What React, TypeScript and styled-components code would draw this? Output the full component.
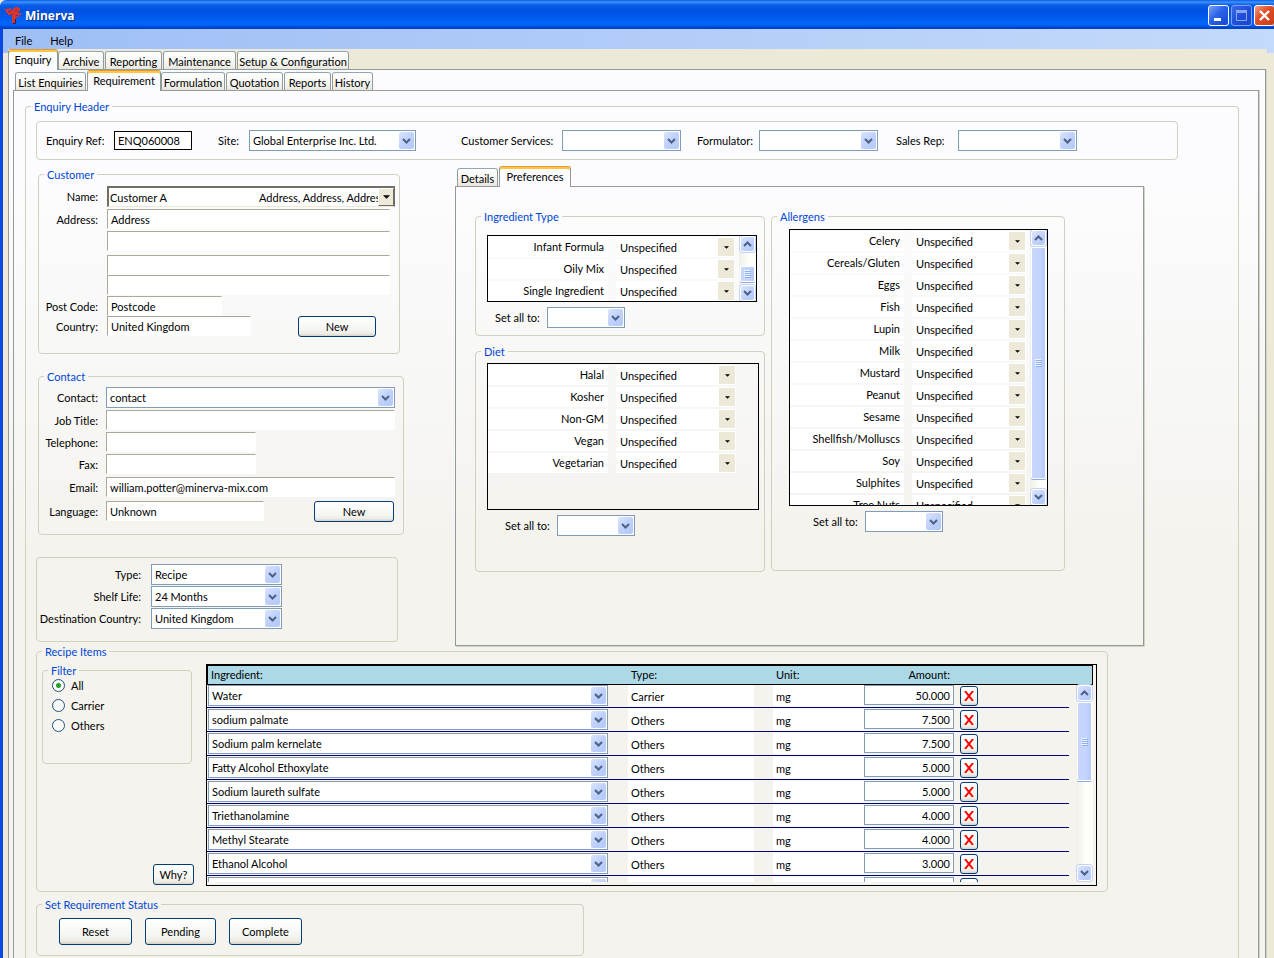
import React, { useId, useState } from 'react';
import styled, { createGlobalStyle } from 'styled-components';

const ink = '#000000';
const sand = '#ece9d8';
const paper = '#f4f3ee';
const groupLine = '#d0d0bf';
const tabLine = '#919b9c';
const captionBlue = '#0046d5';
const fieldBlue = '#7f9db9';

const GlobalStyle = createGlobalStyle`
  * { box-sizing: border-box; }
  body {
    margin: 0;
    background: ${sand};
    color: ${ink};
    font-family: Lato, "Liberation Sans", sans-serif;
    font-size: 11px;
    line-height: 13px;
  }
  button, input, select { font: inherit; color: inherit; margin: 0; }
`;

/* ---------- window frame ---------- */

const Window = styled.div`
  display: flex;
  flex-direction: column;
  min-height: 100vh;
`;

const TitleBar = styled.header`
  display: flex;
  align-items: center;
  gap: 3px;
  height: 29px;
  padding: 2px 0 0 5px;
  overflow: hidden;
  border-top-left-radius: 6px;
  background: linear-gradient(180deg, #0a5be0 0, #3c92ff 2px, #0a5ee8 5px, #0053e1 10px, #0157ea 16px, #0366fb 23px, #0363f8 25px, #0140c4 28px, #0140c4 29px);
`;

const AppTitle = styled.h1`
  flex: 1;
  margin: 0;
  color: #fff;
  font: bold 12px/16px "Open Sans", sans-serif;
  text-shadow: 1px 1px 1px #0a2a80;
`;

const CaptionButtons = styled.div`
  display: flex;
  gap: 2px;
  margin-right: -1px;
`;

const CaptionButton = styled.button<{ $tone: 'blue' | 'dim' | 'red' }>`
  display: grid;
  place-items: center;
  width: 21px;
  height: 21px;
  padding: 0;
  border: 1px solid ${p => (p.$tone === 'dim' ? '#7d9ff0' : '#fff')};
  border-radius: 3px;
  background: ${p =>
    p.$tone === 'red'
      ? 'linear-gradient(135deg, #f0a184 0, #e2512c 40%, #c93c12 100%)'
      : p.$tone === 'dim'
        ? 'linear-gradient(135deg, #3a6be6 0, #1c4fdc 50%, #1a45cf 100%)'
        : 'linear-gradient(135deg, #7c9ff5 0, #2a62ea 45%, #1746cf 100%)'};
`;

const Frame = styled.div`
  flex: 1;
  display: flex;
  flex-direction: column;
  border-left: 3px solid #0b45e3;
`;

const MenuBar = styled.nav`
  display: flex;
  gap: 18px;
  height: 24px;
  padding: 5px 12px 0;
  background: linear-gradient(90deg, #9ebef5 0, #c4dafa 100%);
`;

const MenuItem = styled.button`
  align-self: flex-start;
  height: 13px;
  padding: 0;
  border: 0;
  background: none;
  line-height: 13px;
`;

const Shell = styled.div`
  flex: 1;
  display: flex;
  flex-direction: column;
  margin: -4px 7px 0 5px;
  background: ${sand};
`;

/* ---------- tabs ---------- */

const TabStrip = styled.div<{ $inset: number }>`
  display: flex;
  align-items: flex-end;
  height: 20px;
  padding-left: ${p => p.$inset}px;
`;

const Tab = styled.button<{ $active: boolean; $width: number }>`
  position: relative;
  width: ${p => p.$width}px;
  height: ${p => (p.$active ? 21 : 18)}px;
  margin-right: ${p => (p.$active ? 0 : 1)}px;
  margin-bottom: ${p => (p.$active ? -1 : 0)}px;
  padding: ${p => (p.$active ? '1px 0 3px' : '1px 0 0')};
  border: 1px solid ${tabLine};
  border-top-color: ${p => (p.$active ? '#e5973e' : '#91a7b4')};
  border-bottom: 0;
  border-radius: 3px 3px 0 0;
  background: ${p => (p.$active ? '#fcfcfe' : 'linear-gradient(180deg, #fff 0, #f3f3ee 70%, #e8e6dd 100%)')};
  box-shadow: ${p => (p.$active ? 'inset 0 2px #ffc73c' : 'none')};
  white-space: nowrap;
`;

const pageFill = 'linear-gradient(180deg, #fcfcfe 0, #fcfcfe 80px, #f4f3ee 460px)';

const OuterPage = styled.div`
  flex: 1;
  display: flex;
  flex-direction: column;
  margin-right: 1px;
  border: 1px solid ${tabLine};
  border-bottom: 0;
  background: ${pageFill};
  box-shadow: 1px 0 0 #d5d2c3;
`;

const InnerPage = styled.main`
  flex: 1;
  display: flex;
  flex-direction: column;
  margin: 0 6px 0 4px;
  padding: 9px 19px 0 11px;
  border: 1px solid ${tabLine};
  border-bottom: 0;
  background: ${pageFill};
  box-shadow: 1px 0 0 #d5d2c3;
`;

/* ---------- group boxes ---------- */

const Group = styled.fieldset<{ $width?: string }>`
  min-width: 0;
  width: ${p => p.$width ?? 'auto'};
  margin: 0;
  padding: 0;
  border: 1px solid ${groupLine};
  border-radius: 4px;
`;

const GroupBody = styled.div<{ $pad: string }>`
  padding: ${p => p.$pad};
`;

const Caption = styled.legend`
  margin-left: 5px;
  padding: 0 3px;
  color: ${captionBlue};
  line-height: 13px;
`;

const EnquiryGroup = styled(Group)`
  flex: 1;
  border-bottom: 0;
  border-bottom-left-radius: 0;
  border-bottom-right-radius: 0;
`;

const HeaderStrip = styled.div`
  display: flex;
  align-items: center;
  gap: 16px;
  height: 39px;
  margin-right: 60px;
  padding: 0 9px;
  border: 1px solid ${groupLine};
  border-radius: 4px;
`;

const StripField = styled.div<{ $after?: number }>`
  display: flex;
  align-items: center;
  margin-right: ${p => p.$after ?? 0}px;
`;

const StripLabel = styled.label<{ $width: number }>`
  width: ${p => p.$width}px;
  white-space: nowrap;
`;

const Columns = styled.div`
  display: grid;
  grid-template-columns: 419px minmax(0, 1fr);
  margin: 6px 94px 0 0;
`;

const LeftColumn = styled.div`
  display: flex;
  flex-direction: column;
  align-items: flex-start;
  gap: 16px;
  padding: 2px 0 0 2px;
`;

const TypeBox = styled.div`
  width: 362px;
  margin: 6px 0 0 -2px;
  padding: 6px 0 11px;
  border: 1px solid ${groupLine};
  border-radius: 4px;
`;

const FormGrid = styled.div<{ $rows: string; $label: number; $gap: number }>`
  display: grid;
  grid-template-columns: ${p => p.$label}px minmax(0, 1fr);
  grid-template-rows: ${p => p.$rows};
  column-gap: ${p => p.$gap}px;
  align-items: start;
`;

const RowLabel = styled.label`
  text-align: right;
  line-height: 21px;
  white-space: nowrap;
`;

const FieldAndButton = styled.div<{ $gap: number }>`
  display: flex;
  align-items: flex-start;
  gap: ${p => p.$gap}px;
`;

/* ---------- fields ---------- */

const TextBox = styled.input<{ $width?: number }>`
  display: block;
  width: ${p => (p.$width ? `${p.$width}px` : '100%')};
  height: 20px;
  padding: 0 3px;
  border: 1px solid #fff;
  border-top-color: #aca899;
  border-left-color: #aca899;
  border-radius: 0;
  background: #fff;
`;

const RefBox = styled.input`
  width: 78px;
  height: 19px;
  padding: 0 3px;
  border: 1px solid #000;
  background: #fff;
`;

const AmountBox = styled.input`
  display: block;
  width: 90px;
  height: 20px;
  padding: 0 3px;
  border: 1px solid ${fieldBlue};
  background: #fff;
  text-align: right;
`;

type ComboLook = 'xp' | 'classic' | 'flat';

const ComboShell = styled.div<{ $width?: number; $look: ComboLook }>`
  display: grid;
  grid-template-columns: minmax(0, 1fr) auto;
  width: ${p => (p.$width ? `${p.$width}px` : '100%')};
  height: ${p => (p.$look === 'flat' ? 20 : 21)}px;
  padding: 1px;
  border: ${p => (p.$look === 'flat' ? '0' : p.$look === 'xp' ? `1px solid ${fieldBlue}` : '2px solid #716f64')};
  ${p => p.$look === 'classic' && 'border-bottom: 1px solid #ece9d8; border-right-width: 1px; padding: 0;'}
  background: #fff;
`;

const ComboSelect = styled.select<{ $look: ComboLook }>`
  grid-area: 1 / 1 / 2 / 3;
  width: 100%;
  min-width: 0;
  padding: 0 18px 0 ${p => (p.$look === 'classic' ? 1 : p.$look === 'flat' ? 3 : 2)}px;
  border: 0;
  border-radius: 0;
  background: transparent;
  appearance: none;
`;

const ComboArrow = styled.span<{ $look: ComboLook }>`
  grid-area: 1 / 2;
  display: grid;
  place-items: center;
  width: ${p => (p.$look === 'xp' ? 15 : 16)}px;
  border-radius: ${p => (p.$look === 'xp' ? 2 : 0)}px;
  background: ${p => (p.$look === 'xp' ? 'linear-gradient(135deg, #dbe5fe 0, #bfd0fb 50%, #b2c9f8 100%)' : sand)};
  ${p => p.$look === 'classic' && 'border: 1px solid #716f64; border-top-color: #fff; border-left-color: #fff;'}
  pointer-events: none;
`;

const ComboDetail = styled.span`
  grid-area: 1 / 1;
  justify-self: end;
  align-self: center;
  width: 119px;
  overflow: hidden;
  white-space: nowrap;
  pointer-events: none;
`;

const Chevron = ({ up = false }: { up?: boolean }) => (
  <svg width="9" height="6" viewBox="0 0 9 6" aria-hidden="true">
    <path d={up ? 'M1 5 L4.5 1.5 L8 5' : 'M1 1 L4.5 4.5 L8 1'} fill="none" stroke="#4d6185" strokeWidth="2" />
  </svg>
);

const Triangle = ({ size }: { size: number }) => (
  <svg width={size} height={(size + 1) / 2} viewBox="0 0 8 4" aria-hidden="true">
    <path d="M0 0 H8 L4 4 Z" fill="#000" />
  </svg>
);

interface ComboProps {
  id?: string;
  label?: string;
  value?: string;
  width?: number;
  look?: ComboLook;
  detail?: string;
}

function Combo({ id, label, value = '', width, look = 'xp', detail }: ComboProps) {
  return (
    <ComboShell $width={width} $look={look}>
      <ComboSelect id={id} aria-label={label} defaultValue={value} $look={look}>
        <option value={value}>{value}</option>
      </ComboSelect>
      {detail && <ComboDetail>{detail}</ComboDetail>}
      <ComboArrow $look={look}>
        {look === 'xp' ? <Chevron /> : <Triangle size={look === 'classic' ? 7 : 5} />}
      </ComboArrow>
    </ComboShell>
  );
}

const PushButton = styled.button<{ $width: number; $height?: number }>`
  width: ${p => p.$width}px;
  height: ${p => p.$height ?? 21}px;
  padding: 0;
  border: 1px solid #003c74;
  border-radius: 3px;
  background: linear-gradient(180deg, #fff 0, #f4f4f0 70%, #ecebe5 88%, #d6d0c5 100%);
`;

/* ---------- scroll bar ---------- */

const ScrollTrack = styled.div<{ $height?: number }>`
  display: flex;
  flex-direction: column;
  width: 17px;
  height: ${p => (p.$height ? `${p.$height}px` : 'auto')};
  margin-left: auto;
  padding: 0 1px;
  background: linear-gradient(90deg, #f0efe9 0, #fefefb 60%, #fdfdfa 100%);
`;

const ScrollEnd = styled.button`
  display: grid;
  place-items: center;
  width: 15px;
  height: 16px;
  padding: 0;
  border: 1px solid #fff;
  border-radius: 3px;
  background: linear-gradient(135deg, #dbe5fe 0, #c3d3fd 50%, #b0c8f9 100%);
  box-shadow: 0 0 0 1px #c3d2f4;
`;

const Thumb = styled.div<{ $height: number }>`
  display: grid;
  place-items: center;
  height: ${p => p.$height}px;
  margin-top: 1px;
  border: 1px solid #fff;
  border-radius: 2px;
  background: linear-gradient(90deg, #c8d6fb 0, #c4d4fd 60%, #b5c9fa 100%);
  box-shadow: 0 1px 0 #8ba9e2;
`;

const ScrollSpacer = styled.div<{ $before?: number }>`
  flex: ${p => (p.$before ? `0 0 ${p.$before}px` : 1)};
`;

function ScrollBar({ thumb, before, height }: { thumb: number; before?: number; height?: number }) {
  return (
    <ScrollTrack $height={height}>
      <ScrollEnd type="button" aria-label="Scroll up"><Chevron up /></ScrollEnd>
      {before ? <ScrollSpacer $before={before} /> : null}
      <Thumb $height={thumb}>
        <svg width="7" height="8" viewBox="0 0 7 8" aria-hidden="true">
          <path d="M0 .5H6M0 2.5H6M0 4.5H6M0 6.5H6" stroke="#eef4fe" />
          <path d="M1 1.5H7M1 3.5H7M1 5.5H7M1 7.5H7" stroke="#8cb0f8" />
        </svg>
      </Thumb>
      <ScrollSpacer />
      <ScrollEnd type="button" aria-label="Scroll down"><Chevron /></ScrollEnd>
    </ScrollTrack>
  );
}

/* ---------- preferences ---------- */

const PrefPane = styled.section`
  display: grid;
  grid-template-columns: 290px 294px;
  align-items: start;
  column-gap: 6px;
  padding: 23px 19px 73px;
  border: 1px solid ${tabLine};
  background: linear-gradient(180deg, #fcfcfe 0, #f4f3ee 75%);
  box-shadow: 1px 1px 0 #d5d2c3;
`;

const PrefStack = styled.div`
  display: flex;
  flex-direction: column;
  gap: 9px;
`;

const PrefList = styled.div<{ $width: number; $height: number }>`
  display: flex;
  width: ${p => p.$width}px;
  height: ${p => p.$height}px;
  overflow: hidden;
  border: 1px solid #000;
`;

const PrefRows = styled.div<{ $name: number; $value: number }>`
  display: grid;
  grid-template-columns: ${p => p.$name}px ${p => p.$value}px;
  grid-auto-rows: 20px;
  gap: 2px 8px;
  padding-top: 1px;
`;

const PrefName = styled.label`
  padding-right: 4px;
  background: #fff;
  line-height: 20px;
  text-align: right;
`;

const SetAll = styled.div<{ $indent: number }>`
  display: flex;
  align-items: center;
  margin-top: 5px;
  padding-left: ${p => p.$indent}px;
`;

interface PrefGroupProps {
  title: string;
  items: string[];
  pad: string;
  size: [number, number];
  cols: [number, number];
  indent: number;
  scroll?: { thumb: number; before?: number };
}

function PrefGroup({ title, items, pad, size, cols, indent, scroll }: PrefGroupProps) {
  const id = useId();
  return (
    <Group>
      <Caption>{title}</Caption>
      <GroupBody $pad={pad}>
        <PrefList $width={size[0]} $height={size[1]}>
          <PrefRows $name={cols[0]} $value={cols[1]}>
            {items.map(item => (
              <React.Fragment key={item}>
                <PrefName htmlFor={id + item}>{item}</PrefName>
                <Combo id={id + item} value="Unspecified" look="flat" />
              </React.Fragment>
            ))}
          </PrefRows>
          {scroll && <ScrollBar {...scroll} />}
        </PrefList>
        <SetAll $indent={indent}>
          <StripLabel $width={52} htmlFor={id}>Set all to:</StripLabel>
          <Combo id={id} width={78} />
        </SetAll>
      </GroupBody>
    </Group>
  );
}

/* ---------- recipe items ---------- */

const RecipeGroup = styled(Group)`
  margin: -1px 130px 0 0;
`;

const RecipeBody = styled.div`
  display: grid;
  grid-template-columns: 164px minmax(0, 1fr);
  padding: 6px 10px 5px 5px;
`;

const FilterColumn = styled.div`
  display: flex;
  flex-direction: column;
  justify-content: space-between;
`;

const RadioRow = styled.label`
  display: flex;
  align-items: flex-start;
  gap: 6px;
  height: 20px;
  padding-top: 2px;
`;

const Radio = styled.input`
  width: 13px;
  height: 13px;
  border: 1px solid #1d5281;
  border-radius: 50%;
  appearance: none;
  background: #fafaf8;
  &:checked { background: radial-gradient(circle, #21a121 0, #21a121 2px, #fafaf8 3px); }
`;

const WhyButton = styled(PushButton)`
  align-self: flex-end;
  margin: 0 12px 1px 0;
`;

const ItemsBox = styled.div`
  height: 222px;
  padding-right: 3px;
  border: 1px solid #000;
`;

const ItemsClip = styled.div`
  height: 217px;
  overflow: hidden;
`;

const ItemsTable = styled.table`
  width: 100%;
  table-layout: fixed;
  border-collapse: separate;
  border-spacing: 0;
`;

const HeadCell = styled.th<{ $edge?: 'left' | 'right'; $right?: boolean }>`
  height: 20px;
  padding: 0 ${p => (p.$right ? 10 : 3)}px 1px 3px;
  border: 0 solid #000;
  border-width: 1px ${p => (p.$edge === 'right' ? 1 : 0)}px 1px ${p => (p.$edge === 'left' ? 1 : 0)}px;
  background: #add8e6;
  font-weight: normal;
  text-align: ${p => (p.$right ? 'right' : 'left')};
`;

const Cell = styled.td`
  height: 24px;
  padding: 0;
  vertical-align: top;
  box-shadow: inset 0 -1px ${paper}, inset 0 -2px #00007b;
`;

const IngredientCell = styled(Cell)`
  padding: 0 20px 0 1px;
`;

const ScrollCell = styled.td`
  padding: 0;
  vertical-align: top;
`;

const Plain = styled.div<{ $right?: number }>`
  height: 21px;
  margin-right: ${p => p.$right ?? 0}px;
  padding: 2px 3px 0;
  background: #fff;
  line-height: 20px;
`;

const DeleteButton = styled(PushButton)`
  display: grid;
  place-items: center;
  margin-top: 1px;
`;

const StatusGroup = styled(Group)`
  margin-top: 6px;
`;

const StatusButtons = styled.div`
  display: flex;
  gap: 13px;
  padding: 7px 22px 10px;
`;

/* ---------- data ---------- */

const ingredientTypes = ['Infant Formula', 'Oily Mix', 'Single Ingredient'];
const diets = ['Halal', 'Kosher', 'Non-GM', 'Vegan', 'Vegetarian'];
const allergens = [
  'Celery', 'Cereals/Gluten', 'Eggs', 'Fish', 'Lupin', 'Milk', 'Mustard',
  'Peanut', 'Sesame', 'Shellfish/Molluscs', 'Soy', 'Sulphites', 'Tree Nuts',
];
const recipe: [string, string, string][] = [
  ['Water', 'Carrier', '50.000'],
  ['sodium palmate', 'Others', '7.500'],
  ['Sodium palm kernelate', 'Others', '7.500'],
  ['Fatty Alcohol Ethoxylate', 'Others', '5.000'],
  ['Sodium laureth sulfate', 'Others', '5.000'],
  ['Triethanolamine', 'Others', '4.000'],
  ['Methyl Stearate', 'Others', '4.000'],
  ['Ethanol Alcohol', 'Others', '3.000'],
  ['', '', ''],
];

const mainTabs: [string, number][] = [['Enquiry', 50], ['Archive', 46], ['Reporting', 57], ['Maintenance', 73], ['Setup & Configuration', 112]];
const subTabs: [string, number][] = [['List Enquiries', 71], ['Requirement', 74], ['Formulation', 64], ['Quotation', 57], ['Reports', 47], ['History', 41]];
const prefTabs: [string, number][] = [['Details', 41], ['Preferences', 72]];

function Tabs({ tabs, initial, inset = 0 }: { tabs: [string, number][]; initial: string; inset?: number }) {
  const [active, setActive] = useState(initial);
  return (
    <TabStrip role="tablist" $inset={inset}>
      {tabs.map(([name, width]) => (
        <Tab
          key={name}
          type="button"
          role="tab"
          aria-selected={name === active}
          $active={name === active}
          $width={width}
          onClick={() => setActive(name)}
        >
          {name}
        </Tab>
      ))}
    </TabStrip>
  );
}

const Logo = () => (
  <svg width="17" height="17" viewBox="0 0 17 17" aria-hidden="true">
    <path
      d="M7 16V8H3V6H1V4H0V2H4V1H6V3H8V1H10V0H13V1H15V4H13V6H16V8H14V10H11V12H10V16Z"
      fill="#d8352c"
    />
    <path d="M3 4.500H6M10 3.500H12M11 8.500H13M6 7.500H8" stroke="#7a2a6a" />
    <path d="M10.500 12V16.500H8" fill="none" stroke="#3a1a4a" />
  </svg>
);

export default function App() {
  const [filter, setFilter] = useState('All');
  return (
    <Window>
      <GlobalStyle />
      <TitleBar>
        <Logo />
        <AppTitle>Minerva</AppTitle>
        <CaptionButtons>
          <CaptionButton type="button" aria-label="Minimize" $tone="blue">
            <svg width="13" height="13" viewBox="0 0 13 13"><path d="M2 9H9V12H2Z" fill="#fff" /></svg>
          </CaptionButton>
          <CaptionButton type="button" aria-label="Maximize" $tone="dim">
            <svg width="13" height="13" viewBox="0 0 13 13"><path d="M1.500 2V11.500H11.500V2M1 2.500H12" fill="none" stroke="#8ea3ee" /><path d="M1 1H12V4H1Z" fill="#8ea3ee" /></svg>
          </CaptionButton>
          <CaptionButton type="button" aria-label="Close" $tone="red">
            <svg width="13" height="13" viewBox="0 0 13 13"><path d="M2 2L11 11M11 2L2 11" stroke="#fff" strokeWidth="2.400" /></svg>
          </CaptionButton>
        </CaptionButtons>
      </TitleBar>
      <Frame>
        <MenuBar>
          <MenuItem type="button">File</MenuItem>
          <MenuItem type="button">Help</MenuItem>
        </MenuBar>
        <Shell>
          <Tabs tabs={mainTabs} initial="Enquiry" />
          <OuterPage>
            <Tabs tabs={subTabs} initial="Requirement" inset={6} />
            <InnerPage>
              <EnquiryGroup>
                <Caption>Enquiry Header</Caption>
                <GroupBody $pad="8px 0 2px 10px">
                  <HeaderStrip>
                    <StripField $after={10}>
                      <StripLabel $width={68} htmlFor="ref">Enquiry Ref:</StripLabel>
                      <RefBox id="ref" defaultValue="ENQ060008" />
                    </StripField>
                    <StripField $after={29}>
                      <StripLabel $width={31} htmlFor="site">Site:</StripLabel>
                      <Combo id="site" value="Global Enterprise Inc. Ltd." width={167} />
                    </StripField>
                    <StripField>
                      <StripLabel $width={101} htmlFor="services">Customer Services:</StripLabel>
                      <Combo id="services" width={119} />
                    </StripField>
                    <StripField $after={2}>
                      <StripLabel $width={62} htmlFor="formulator">Formulator:</StripLabel>
                      <Combo id="formulator" width={119} />
                    </StripField>
                    <StripField>
                      <StripLabel $width={62} htmlFor="sales">Sales Rep:</StripLabel>
                      <Combo id="sales" width={119} />
                    </StripField>
                  </HeaderStrip>

                  <Columns>
                    <LeftColumn>
                      <Group $width="362px">
                        <Caption>Customer</Caption>
                        <GroupBody $pad="5px 4px 15px 0">
                          <FormGrid $rows="23px 22px 24px 20px 21px 20px 22px" $label={59} $gap={9}>
                            <RowLabel htmlFor="name">Name:</RowLabel>
                            <Combo id="name" value="Customer A" look="classic" detail="Address, Address, Address" />
                            <RowLabel htmlFor="address">Address:</RowLabel>
                            <TextBox id="address" $width={283} defaultValue="Address" />
                            <span />
                            <TextBox aria-label="Address line 2" $width={283} />
                            <span />
                            <TextBox aria-label="Address line 3" $width={283} />
                            <span />
                            <TextBox aria-label="Address line 4" $width={283} />
                            <RowLabel htmlFor="postcode">Post Code:</RowLabel>
                            <TextBox id="postcode" $width={115} defaultValue="Postcode" />
                            <RowLabel htmlFor="country">Country:</RowLabel>
                            <FieldAndButton $gap={47}>
                              <TextBox id="country" $width={144} defaultValue="United Kingdom" />
                              <PushButton type="button" $width={78}>New</PushButton>
                            </FieldAndButton>
                          </FormGrid>
                        </GroupBody>
                      </Group>

                      <Group $width="366px">
                        <Caption>Contact</Caption>
                        <GroupBody $pad="4px 8px 12px 0">
                          <FormGrid $rows="23px 22px 22px 23px 24px 21px" $label={59} $gap={8}>
                            <RowLabel htmlFor="contact">Contact:</RowLabel>
                            <Combo id="contact" value="contact" />
                            <RowLabel htmlFor="job">Job Title:</RowLabel>
                            <TextBox id="job" />
                            <RowLabel htmlFor="phone">Telephone:</RowLabel>
                            <TextBox id="phone" $width={150} />
                            <RowLabel htmlFor="fax">Fax:</RowLabel>
                            <TextBox id="fax" $width={150} />
                            <RowLabel htmlFor="email">Email:</RowLabel>
                            <TextBox id="email" defaultValue="william.potter@minerva-mix.com" />
                            <RowLabel htmlFor="language">Language:</RowLabel>
                            <FieldAndButton $gap={50}>
                              <TextBox id="language" $width={158} defaultValue="Unknown" />
                              <PushButton type="button" $width={80}>New</PushButton>
                            </FieldAndButton>
                          </FormGrid>
                        </GroupBody>
                      </Group>

                      <TypeBox>
                        <FormGrid $rows="22px 22px 22px" $label={104} $gap={10}>
                          <RowLabel htmlFor="type">Type:</RowLabel>
                          <Combo id="type" value="Recipe" width={131} />
                          <RowLabel htmlFor="shelf">Shelf Life:</RowLabel>
                          <Combo id="shelf" value="24 Months" width={131} />
                          <RowLabel htmlFor="destination">Destination Country:</RowLabel>
                          <Combo id="destination" value="United Kingdom" width={131} />
                        </FormGrid>
                      </TypeBox>
                    </LeftColumn>

                    <div>
                      <Tabs tabs={prefTabs} initial="Preferences" inset={2} />
                      <PrefPane>
                        <PrefStack>
                          <PrefGroup title="Ingredient Type" items={ingredientTypes} pad="12px 0 7px 11px" size={[270, 67]} cols={[120, 119]} indent={8} scroll={{ thumb: 16, before: 13 }} />
                          <PrefGroup title="Diet" items={diets} pad="5px 0 35px 11px" size={[272, 147]} cols={[120, 120]} indent={18} />
                        </PrefStack>
                        <PrefGroup title="Allergens" items={allergens} pad="6px 0 38px 17px" size={[259, 277]} cols={[114, 114]} indent={24} scroll={{ thumb: 232 }} />
                      </PrefPane>
                    </div>
                  </Columns>

                  <RecipeGroup>
                    <Caption>Recipe Items</Caption>
                    <RecipeBody>
                      <FilterColumn>
                        <Group $width="150px">
                          <Caption>Filter</Caption>
                          <GroupBody $pad="0 9px 26px">
                            {['All', 'Carrier', 'Others'].map(name => (
                              <RadioRow key={name}>
                                <Radio type="radio" name="filter" checked={filter === name} onChange={() => setFilter(name)} />
                                {name}
                              </RadioRow>
                            ))}
                          </GroupBody>
                        </Group>
                        <WhyButton type="button" $width={41}>Why?</WhyButton>
                      </FilterColumn>
                      <ItemsBox>
                        <ItemsClip>
                          <ItemsTable>
                            <colgroup>
                              <col />
                              <col width="145" />
                              <col width="91" />
                              <col width="96" />
                              <col width="109" />
                              <col width="24" />
                            </colgroup>
                            <thead>
                              <tr>
                                <HeadCell $edge="left">Ingredient:</HeadCell>
                                <HeadCell>Type:</HeadCell>
                                <HeadCell>Unit:</HeadCell>
                                <HeadCell $right>Amount:</HeadCell>
                                <HeadCell />
                                <HeadCell $edge="right" />
                              </tr>
                            </thead>
                            <tbody>
                              {recipe.map(([name, type, amount], i) => (
                                <tr key={i}>
                                  <IngredientCell><Combo label="Ingredient" value={name} /></IngredientCell>
                                  <Cell><Plain $right={19}>{type}</Plain></Cell>
                                  <Cell><Plain>{type && 'mg'}</Plain></Cell>
                                  <Cell><AmountBox aria-label="Amount" defaultValue={amount} /></Cell>
                                  <Cell>
                                    <DeleteButton type="button" aria-label="Remove" $width={18} $height={20}>
                                      <svg width="10" height="10" viewBox="0 0 10 10"><path d="M1 0L9 10M9 0L1 10" stroke="#f00" strokeWidth="2" /></svg>
                                    </DeleteButton>
                                  </Cell>
                                  {i === 0 && (
                                    <ScrollCell rowSpan={recipe.length}>
                                      <ScrollBar thumb={79} height={196} />
                                    </ScrollCell>
                                  )}
                                </tr>
                              ))}
                            </tbody>
                          </ItemsTable>
                        </ItemsClip>
                      </ItemsBox>
                    </RecipeBody>
                  </RecipeGroup>

                  <StatusGroup $width="548px">
                    <Caption>Set Requirement Status</Caption>
                    <StatusButtons>
                      <PushButton type="button" $width={73} $height={27}>Reset</PushButton>
                      <PushButton type="button" $width={71} $height={27}>Pending</PushButton>
                      <PushButton type="button" $width={73} $height={27}>Complete</PushButton>
                    </StatusButtons>
                  </StatusGroup>
                </GroupBody>
              </EnquiryGroup>
            </InnerPage>
          </OuterPage>
        </Shell>
      </Frame>
    </Window>
  );
}
